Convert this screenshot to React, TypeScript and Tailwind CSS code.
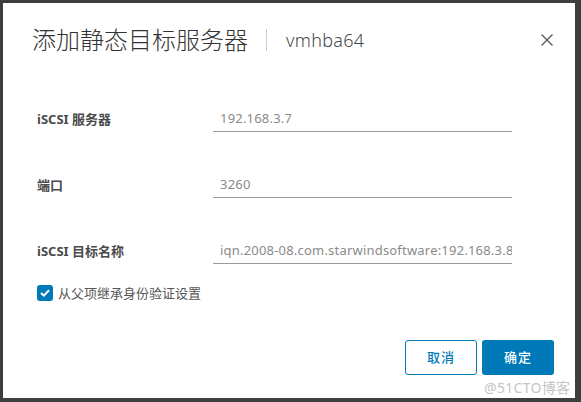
const font = { fontFamily: '"Noto Sans", "Noto Sans CJK SC", sans-serif' };

const fields = [
  { label: "iSCSI 服务器", value: "192.168.3.7" },
  { label: "端口", value: "3260" },
  { label: "iSCSI 目标名称", value: "iqn.2008-08.com.starwindsoftware:192.168.3.8" },
];

const App = () => {
  return (
    <div
      className="relative w-[581px] h-[402px] bg-[#3e3e3e] pt-[3px] pl-[3px] pr-[6px] pb-[4px]"
      style={font}
    >
      <div className="h-full bg-white flex flex-col">
        {/* Header */}
        <div className="flex items-center h-[32px] mt-[21px] pl-[29px] pr-[22px]">
          <span className="text-[24px] font-light leading-[32px] text-[#333333]">
            添加静态目标服务器
          </span>
          <div className="w-px h-[22px] bg-[#cccccc] ml-[18px] mr-[19px]" />
          <span className="text-[18px] font-light tracking-[0.3px] leading-[32px] text-[#4a4a4a]">vmhba64</span>
          <button className="ml-auto w-[12px] h-[12px] flex items-center justify-center">
            <svg width="12" height="12" viewBox="0 0 12 12">
              <path d="M0.5 0.5 L11.5 11.5 M11.5 0.5 L0.5 11.5" stroke="#565656" strokeWidth="1.3" />
            </svg>
          </button>
        </div>

        {/* Form */}
        <div className="flex flex-col gap-[40px] mt-[50px] pl-[34px]">
          {fields.map((f) => (
            <div key={f.label} className="grid grid-cols-[176px_299px] items-center">
              <div className="text-[13px] font-bold text-[#4a4a4a] leading-none">{f.label}</div>
              <div className="h-[26px] border-b border-[#9a9a9a] pl-[7px] flex items-center overflow-hidden">
                <span className="text-[13px] tracking-[0.2px] text-[#8a8a8a] whitespace-nowrap">{f.value}</span>
              </div>
            </div>
          ))}
        </div>

        {/* Checkbox */}
        <div className="flex items-center gap-[5px] mt-[21px] pl-[34px]">
          <div className="w-[16px] h-[16px] rounded-[3px] bg-[#0079b8] flex items-center justify-center">
            <svg width="10" height="8" viewBox="0 0 10 8">
              <path d="M1 4 L3.8 6.6 L9 1.2" fill="none" stroke="white" strokeWidth="2" />
            </svg>
          </div>
          <span className="text-[13px] text-[#565656] leading-none">从父项继承身份验证设置</span>
        </div>

        {/* Buttons */}
        <div className="flex justify-end gap-[5px] mt-[39px] pr-[21px]">
          <button className="w-[72px] h-[35px] rounded-[3px] border border-[#0079b8] text-[#0079b8] text-[13px] font-medium tracking-[1px]">
            取消
          </button>
          <button className="w-[72px] h-[35px] rounded-[3px] bg-[#0079b8] text-white text-[13px] font-medium tracking-[1px]">
            确定
          </button>
        </div>
      </div>

      {/* Watermark */}
      <div className="absolute left-[484px] top-[377px] text-[14px] tracking-[0.3px] text-[#c4c4c4] whitespace-nowrap">
        @51CTO博客
      </div>
    </div>
  );
};

export default App;
